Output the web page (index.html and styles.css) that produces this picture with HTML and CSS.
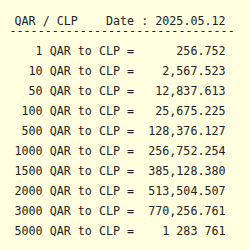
FILE: index.html
```html
<!DOCTYPE html>
<html lang="en">
<head>
    <meta charset="UTF-8">
    <title>QAR / CLP</title>
    <link rel="stylesheet" href="styles.css">
</head>
<body>
    <div class="rates">
        <div class="head">QAR / CLP    Date : 2025.05.12</div>
        <div class="rule">--------------------------------</div>
        <div class="list">
            <div class="row"><span class="amt">1</span> QAR to CLP = <span class="val">256.752</span></div>
            <div class="row"><span class="amt">10</span> QAR to CLP = <span class="val">2,567.523</span></div>
            <div class="row"><span class="amt">50</span> QAR to CLP = <span class="val">12,837.613</span></div>
            <div class="row"><span class="amt">100</span> QAR to CLP = <span class="val">25,675.225</span></div>
            <div class="row"><span class="amt">500</span> QAR to CLP = <span class="val">128,376.127</span></div>
            <div class="row"><span class="amt">1000</span> QAR to CLP = <span class="val">256,752.254</span></div>
            <div class="row"><span class="amt">1500</span> QAR to CLP = <span class="val">385,128.380</span></div>
            <div class="row"><span class="amt">2000</span> QAR to CLP = <span class="val">513,504.507</span></div>
            <div class="row"><span class="amt">3000</span> QAR to CLP = <span class="val">770,256.761</span></div>
            <div class="row"><span class="amt">5000</span> QAR to CLP = <span class="val">1 283 761</span></div>
        </div>
    </div>
</body>
</html>
```

FILE: styles.css
```css
* {
    margin: 0;
    padding: 0;
    box-sizing: border-box;
}

body {
    background: #ffffe0;
    font-family: "DejaVu Sans Mono", monospace;
    font-size: 11.7px;
    line-height: 20px;
    color: #222;
}

.rates {
    padding: 11px 0 0 14.5px;
}

.head, .rule, .row {
    white-space: pre;
}

.rule {
    line-height: 0;
    margin-left: -5px;
}

.list {
    padding-top: 10px;
}

.amt {
    display: inline-block;
    width: 4ch;
    text-align: right;
}

.val {
    display: inline-block;
    width: 12ch;
    text-align: right;
}
```
